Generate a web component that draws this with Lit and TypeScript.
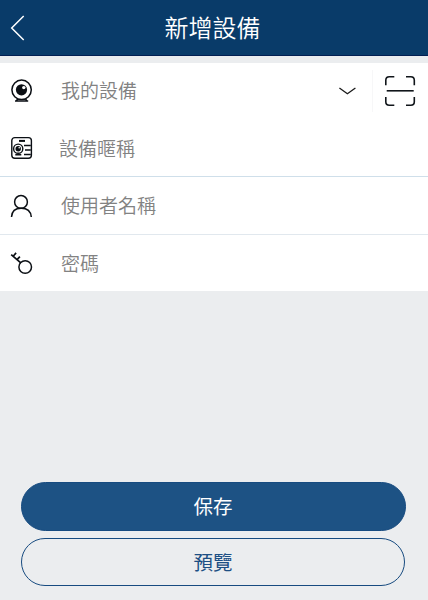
import { LitElement, html, css, svg } from 'lit';
import { customElement, property } from 'lit/decorators.js';

const icons = {
  camera: svg`
    <circle cx="11.6" cy="10.8" r="9.7" stroke-width="1.5" />
    <circle cx="11.5" cy="10.8" r="5.6" fill="currentColor" stroke="none" />
    <circle cx="13.8" cy="8.6" r="1.7" fill="#fff" stroke="none" />
    <path d="M7.6 19.8 L6.6 21.6 M15.6 19.8 L16.6 21.6 M5 22 H18.2" stroke-width="1.5" />
  `,
  card: svg`
    <rect x="1.8" y="1.6" width="19.6" height="20.6" rx="3" stroke-width="1.4" />
    <path d="M9 4.9 H15" stroke-width="2" />
    <circle cx="8.2" cy="12.7" r="4.6" stroke-width="1.4" />
    <circle cx="8.2" cy="12.7" r="2.7" fill="currentColor" stroke="none" />
    <circle cx="9.2" cy="11.7" r="0.8" fill="#fff" stroke="none" />
    <path d="M5.3 18.8 H11.3 M14 9.5 H20.8 M15 14 H20.8 M14 18.5 H20.8" stroke-width="1.4" />
  `,
  user: svg`
    <circle cx="11" cy="7.9" r="6.4" />
    <path d="M1.5 23 C1.8 17.5 5.5 14.3 11.2 14.3 S20.8 17.5 21.3 23" />
  `,
  key: svg`
    <circle cx="15.2" cy="16" r="6.3" />
    <path d="M10.8 11.8 L1.2 3.6 M3.2 5.2 L6.1 1.9 M7 8.6 L9.9 5.6" stroke-width="1.7" />
  `,
};

@customElement('device-field')
class DeviceField extends LitElement {
  @property() icon: keyof typeof icons = 'camera';
  @property() label = '';

  static styles = css`
    :host {
      display: flex;
      align-items: center;
      box-sizing: border-box;
      padding-left: 10px;
    }

    .icon {
      width: 24px;
      height: 24px;
      flex: none;
      color: #0b0f14;
      fill: none;
      stroke: currentColor;
      stroke-width: 1.5;
    }

    .label {
      flex: 1;
      margin-left: var(--label-gap, 27px);
      padding-bottom: var(--label-lift, 1px);
      font-size: 19px;
      line-height: 28px;
      font-weight: 350;
      color: #828282;
    }
  `;

  render() {
    return html`
      <svg class="icon" viewBox="0 0 24 24">${icons[this.icon]}</svg>
      <span class="label">${this.label}</span>
      <slot></slot>
    `;
  }
}

@customElement('app-root')
class AppRoot extends LitElement {
  static styles = css`
    :host {
      display: flex;
      flex-direction: column;
      box-sizing: border-box;
      height: 600px;
      background: #ebedef;
      font-family: 'Noto Sans CJK TC', sans-serif;
    }

    .header {
      display: grid;
      grid-template-columns: 48px 1fr 51px;
      align-items: center;
      box-sizing: border-box;
      height: 56px;
      border-bottom: 1px solid #021f52;
      background: #093b69;
      color: #fff;
    }

    .back {
      width: 16px;
      height: 28px;
      margin-left: 10px;
      fill: none;
      stroke: #fff;
      stroke-width: 1.5;
    }

    .title {
      margin: 0;
      padding-bottom: 1px;
      font-size: 24px;
      line-height: 36px;
      font-weight: 350;
      text-align: center;
    }

    .form {
      display: grid;
      grid-template-rows: 57px 57px 58px 56px;
      margin-top: 7px;
      background: #fff;
    }

    .device {
      --label-lift: 2px;
      padding-bottom: 1px;
    }

    .nickname {
      --label-gap: 25px;
      border-bottom: 1px solid #cfdfea;
    }

    .username {
      border-bottom: 1px solid #e1e8ee;
    }

    .arrow {
      width: 18px;
      height: 10px;
      margin-right: 16px;
      padding-bottom: 1px;
      fill: none;
      stroke: #1a1a1a;
      stroke-width: 1.3;
    }

    .scan {
      display: flex;
      align-items: center;
      height: 42px;
      padding: 0 12px 0 11px;
      border-left: 1px solid #f7f7f8;
    }

    .scan-icon {
      width: 32px;
      height: 32px;
      fill: none;
      stroke: #10151a;
      stroke-width: 1.6;
    }

    .actions {
      display: flex;
      flex-direction: column;
      gap: 7px;
      margin-top: auto;
      padding: 0 23px 14px 21px;
    }

    .button {
      box-sizing: border-box;
      height: 48px;
      padding: 0;
      border: 1px solid #174b80;
      border-radius: 25px;
      background: transparent;
      color: #1c4f84;
      font-family: inherit;
      font-size: 19.5px;
      font-weight: 400;
      line-height: 28px;
    }

    .button--primary {
      height: 49px;
      margin: 0 -0.5px;
      padding-bottom: 1px;
      background: #1d5284;
      color: #fff;
    }
  `;

  render() {
    return html`
      <header class="header">
        <svg class="back" viewBox="0 0 16 28"><path d="M13.7 2 L1.7 14 L13.7 26" /></svg>
        <h1 class="title">新增設備</h1>
      </header>

      <section class="form">
        <device-field class="device" icon="camera" label="我的設備">
          <svg class="arrow" viewBox="0 0 18 10"><path d="M1.4 2 L9.4 7.8 L17.4 2" /></svg>
          <div class="scan">
            <svg class="scan-icon" viewBox="0 0 32 32">
              <path d="M1.8 10.3 V5.3 Q1.8 1.8 5.3 1.8 H10.3 M22 1.8 H26.8 Q30.3 1.8 30.3 5.3 V10.3" />
              <path d="M30.3 22 V26.8 Q30.3 30.3 26.8 30.3 H22 M10.3 30.3 H5.3 Q1.8 30.3 1.8 26.8 V22" />
              <path d="M2.7 15.8 H29.7" />
            </svg>
          </div>
        </device-field>
        <device-field class="nickname" icon="card" label="設備暱稱"></device-field>
        <device-field class="username" icon="user" label="使用者名稱"></device-field>
        <device-field icon="key" label="密碼"></device-field>
      </section>

      <div class="actions">
        <button class="button button--primary">保存</button>
        <button class="button">預覽</button>
      </div>
    `;
  }
}
